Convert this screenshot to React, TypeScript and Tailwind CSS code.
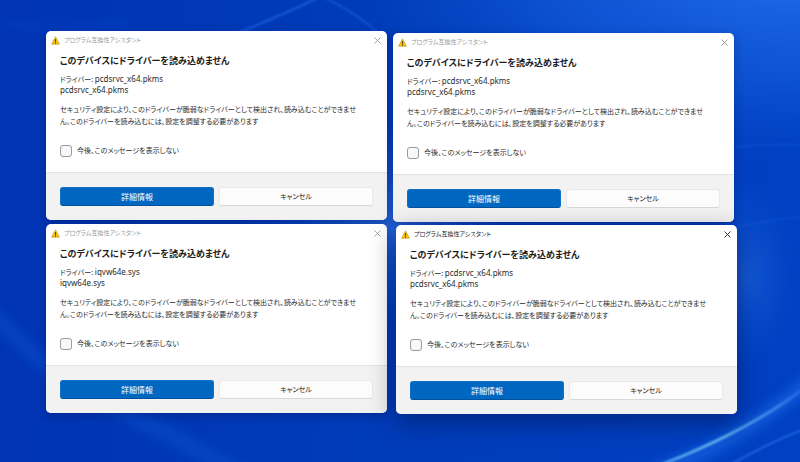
import React, { useState } from 'react';

type Dialog = {
    id: string;
    file: string;
    active: boolean;
    place: string;
};

const initialDialogs: Dialog[] = [
    { id: 'top-left', file: 'pcdsrvc_x64.pkms', active: false, place: 'left-[46px] top-[31px]' },
    { id: 'top-right', file: 'pcdsrvc_x64.pkms', active: false, place: 'left-[393px] top-[33px]' },
    { id: 'bottom-left', file: 'iqvw64e.sys', active: false, place: 'left-[46px] top-[224px]' },
    { id: 'bottom-right', file: 'pcdsrvc_x64.pkms', active: true, place: 'left-[396px] top-[225px]' },
];

const Wallpaper: React.FC = () => (
    <svg
        className="absolute inset-0 w-full h-full"
        viewBox="0 0 800 462"
        preserveAspectRatio="xMidYMid slice"
        aria-hidden="true"
    >
        <defs>
            <linearGradient id="base" x1="0" y1="0" x2="1" y2="0">
                <stop offset="0" stopColor="#0034b4" />
                <stop offset="0.5" stopColor="#003cb9" />
                <stop offset="1" stopColor="#0040c2" />
            </linearGradient>
            <radialGradient id="glowTop">
                <stop offset="0" stopColor="#2474f2" stopOpacity="0.9" />
                <stop offset="0.6" stopColor="#145cdc" stopOpacity="0.6" />
                <stop offset="1" stopColor="#0a50d0" stopOpacity="0" />
            </radialGradient>
            <radialGradient id="glowMid">
                <stop offset="0" stopColor="#2f72e4" stopOpacity="0.75" />
                <stop offset="1" stopColor="#0a50d0" stopOpacity="0" />
            </radialGradient>
            <radialGradient id="glowSide">
                <stop offset="0" stopColor="#1d62dc" stopOpacity="0.75" />
                <stop offset="1" stopColor="#0a50d0" stopOpacity="0" />
            </radialGradient>
            <linearGradient id="streak" x1="0" y1="1" x2="1" y2="0">
                <stop offset="0" stopColor="#4da3f0" />
                <stop offset="0.4" stopColor="#6fc4f5" />
                <stop offset="1" stopColor="#1f66e6" />
            </linearGradient>
            <filter id="soft" x="-30%" y="-30%" width="160%" height="160%">
                <feGaussianBlur stdDeviation="6" />
            </filter>
            <filter id="fine" x="-10%" y="-10%" width="120%" height="120%">
                <feGaussianBlur stdDeviation="0.9" />
            </filter>
        </defs>
        <rect width="800" height="462" fill="url(#base)" />
        <ellipse cx="800" cy="-30" rx="450" ry="190" fill="url(#glowTop)" />
        <ellipse cx="390" cy="225" rx="150" ry="110" fill="url(#glowMid)" />
        <ellipse cx="745" cy="275" rx="55" ry="95" fill="url(#glowSide)" />
        {/* broad bands */}
        <path d="M-10 310 Q40 370 120 410 T250 480" stroke="#0d59d6" strokeWidth="16" fill="none" opacity="0.4" filter="url(#soft)" />
        <path d="M0 20 Q60 40 130 20" stroke="#0b4fd0" strokeWidth="8" fill="none" opacity="0.3" filter="url(#soft)" />
        <path d="M700 152 Q760 142 800 145" stroke="#1a5bdc" strokeWidth="2" fill="none" opacity="0.4" filter="url(#fine)" />
        <path d="M730 228 Q770 220 800 217" stroke="#1a5bdc" strokeWidth="2" fill="none" opacity="0.4" filter="url(#fine)" />
        {/* crossing beams above the windows */}
        <path d="M235 34 Q280 16 318 -2" stroke="#2269e6" strokeWidth="2" fill="none" opacity="0.7" filter="url(#fine)" />
        <path d="M325 -2 Q355 12 380 34" stroke="#2269e6" strokeWidth="2" fill="none" opacity="0.5" filter="url(#fine)" />
        {/* bright arcs, lower right */}
        <path d="M650 475 Q745 440 810 380" stroke="#2273f2" strokeWidth="13" fill="none" opacity="0.55" filter="url(#soft)" />
        <path d="M655 467 Q745 433 803 389" stroke="url(#streak)" strokeWidth="2.6" fill="none" filter="url(#fine)" />
        <path d="M732 464 Q768 443 802 430" stroke="#2468e4" strokeWidth="1.8" fill="none" filter="url(#fine)" />
    </svg>
);

const WarningIcon: React.FC = () => (
    <svg className="w-[9px] h-[9px] shrink-0" viewBox="0 0 18 18" aria-hidden="true">
        <path d="M9 1.5 L17 16.5 H1 Z" fill="#f5c000" stroke="#c9a33a" strokeWidth="1.4" strokeLinejoin="round" />
        <path d="M8.1 6.5 H10 L9.7 11.5 H8.4 Z" fill="#1b1b1b" />
        <circle cx="9.1" cy="13.8" r="1.1" fill="#1b1b1b" />
    </svg>
);

const CompatibilityDialog: React.FC<{ dialog: Dialog; onClose: () => void }> = ({ dialog, onClose }) => (
    <section
        role="dialog"
        aria-labelledby={`${dialog.id}-heading`}
        className={`absolute w-[341px] flex flex-col overflow-hidden rounded-[5px] bg-white ${dialog.place} ${
            dialog.active
                ? 'shadow-[0_8px_24px_rgba(0,15,70,0.5)]'
                : 'shadow-[0_3px_10px_rgba(0,15,70,0.3)]'
        }`}
    >
        <header
            className={`flex items-center h-[18px] px-[5px] gap-[4px] ${
                dialog.active ? 'text-[#1b1b1b]' : 'text-[#999999]'
            }`}
        >
            <WarningIcon />
            <span className="flex-1 text-[6px] leading-[12px]">プログラム互換性アシスタント</span>
            <button type="button" aria-label="閉じる" onClick={onClose} className="p-px">
                <svg className="w-[7px] h-[7px]" viewBox="0 0 7 7" fill="none" stroke="currentColor" strokeWidth="0.9">
                    <path d="M0.5 0.5 L6.5 6.5 M6.5 0.5 L0.5 6.5" />
                </svg>
            </button>
        </header>

        <div className="px-[14px] pt-[5px] pb-[15px] text-[#2b2b2b]">
            <h2 id={`${dialog.id}-heading`} className="text-[9px] leading-[14px] font-bold text-[#1b1b1b]">
                このデバイスにドライバーを読み込めません
            </h2>
            <p className="mt-[5px] text-[8px] leading-[11px]">
                <span className="text-[7px] leading-none">ドライバー: </span>
                {dialog.file}
                <br />
                {dialog.file}
            </p>
            <p className="mt-[9px] text-[7px] leading-[12px] whitespace-nowrap">
                セキュリティ設定により、このドライバーが脆弱なドライバーとして検出され、読み込むことができませ
                <br />
                ん。このドライバーを読み込むには、設定を調整する必要があります
            </p>
            <label className="mt-[17px] flex w-fit items-center gap-[5px] text-[7px] leading-[12px]">
                <input
                    type="checkbox"
                    className="appearance-none w-[12px] h-[12px] rounded-[3px] border border-[#999999] bg-[#f8f8f8] checked:bg-[#0067c0]"
                />
                今後、このメッセージを表示しない
            </label>
        </div>

        <footer className="grid grid-cols-2 gap-[5px] border-t border-[#e4e4e4] bg-[#f2f2f2] p-[14px]">
            <button type="button" className="h-[19px] rounded-[3px] border border-[#0f70c5] border-b-[#00529c] bg-[#0067c0] text-[8px] leading-[12px] text-white">
                詳細情報
            </button>
            <button
                type="button"
                onClick={onClose}
                className="h-[19px] rounded-[3px] border border-[#e9e9e9] border-b-[#d8d8d8] bg-[#fcfcfc] text-[7px] leading-[12px] text-[#1b1b1b]"
            >
                キャンセル
            </button>
        </footer>
    </section>
);

const App: React.FC = () => {
    const [dialogs, setDialogs] = useState(initialDialogs);

    const close = (id: string) => setDialogs((list) => list.filter((d) => d.id !== id));

    return (
        <main
            lang="ja"
            className="relative min-h-screen overflow-hidden bg-[#003ab8] font-['Noto_Sans','Noto_Sans_CJK_JP',sans-serif] [font-feature-settings:'palt']"
        >
            <Wallpaper />
            {dialogs.map((dialog) => (
                <CompatibilityDialog key={dialog.id} dialog={dialog} onClose={() => close(dialog.id)} />
            ))}
        </main>
    );
};

export default App;
